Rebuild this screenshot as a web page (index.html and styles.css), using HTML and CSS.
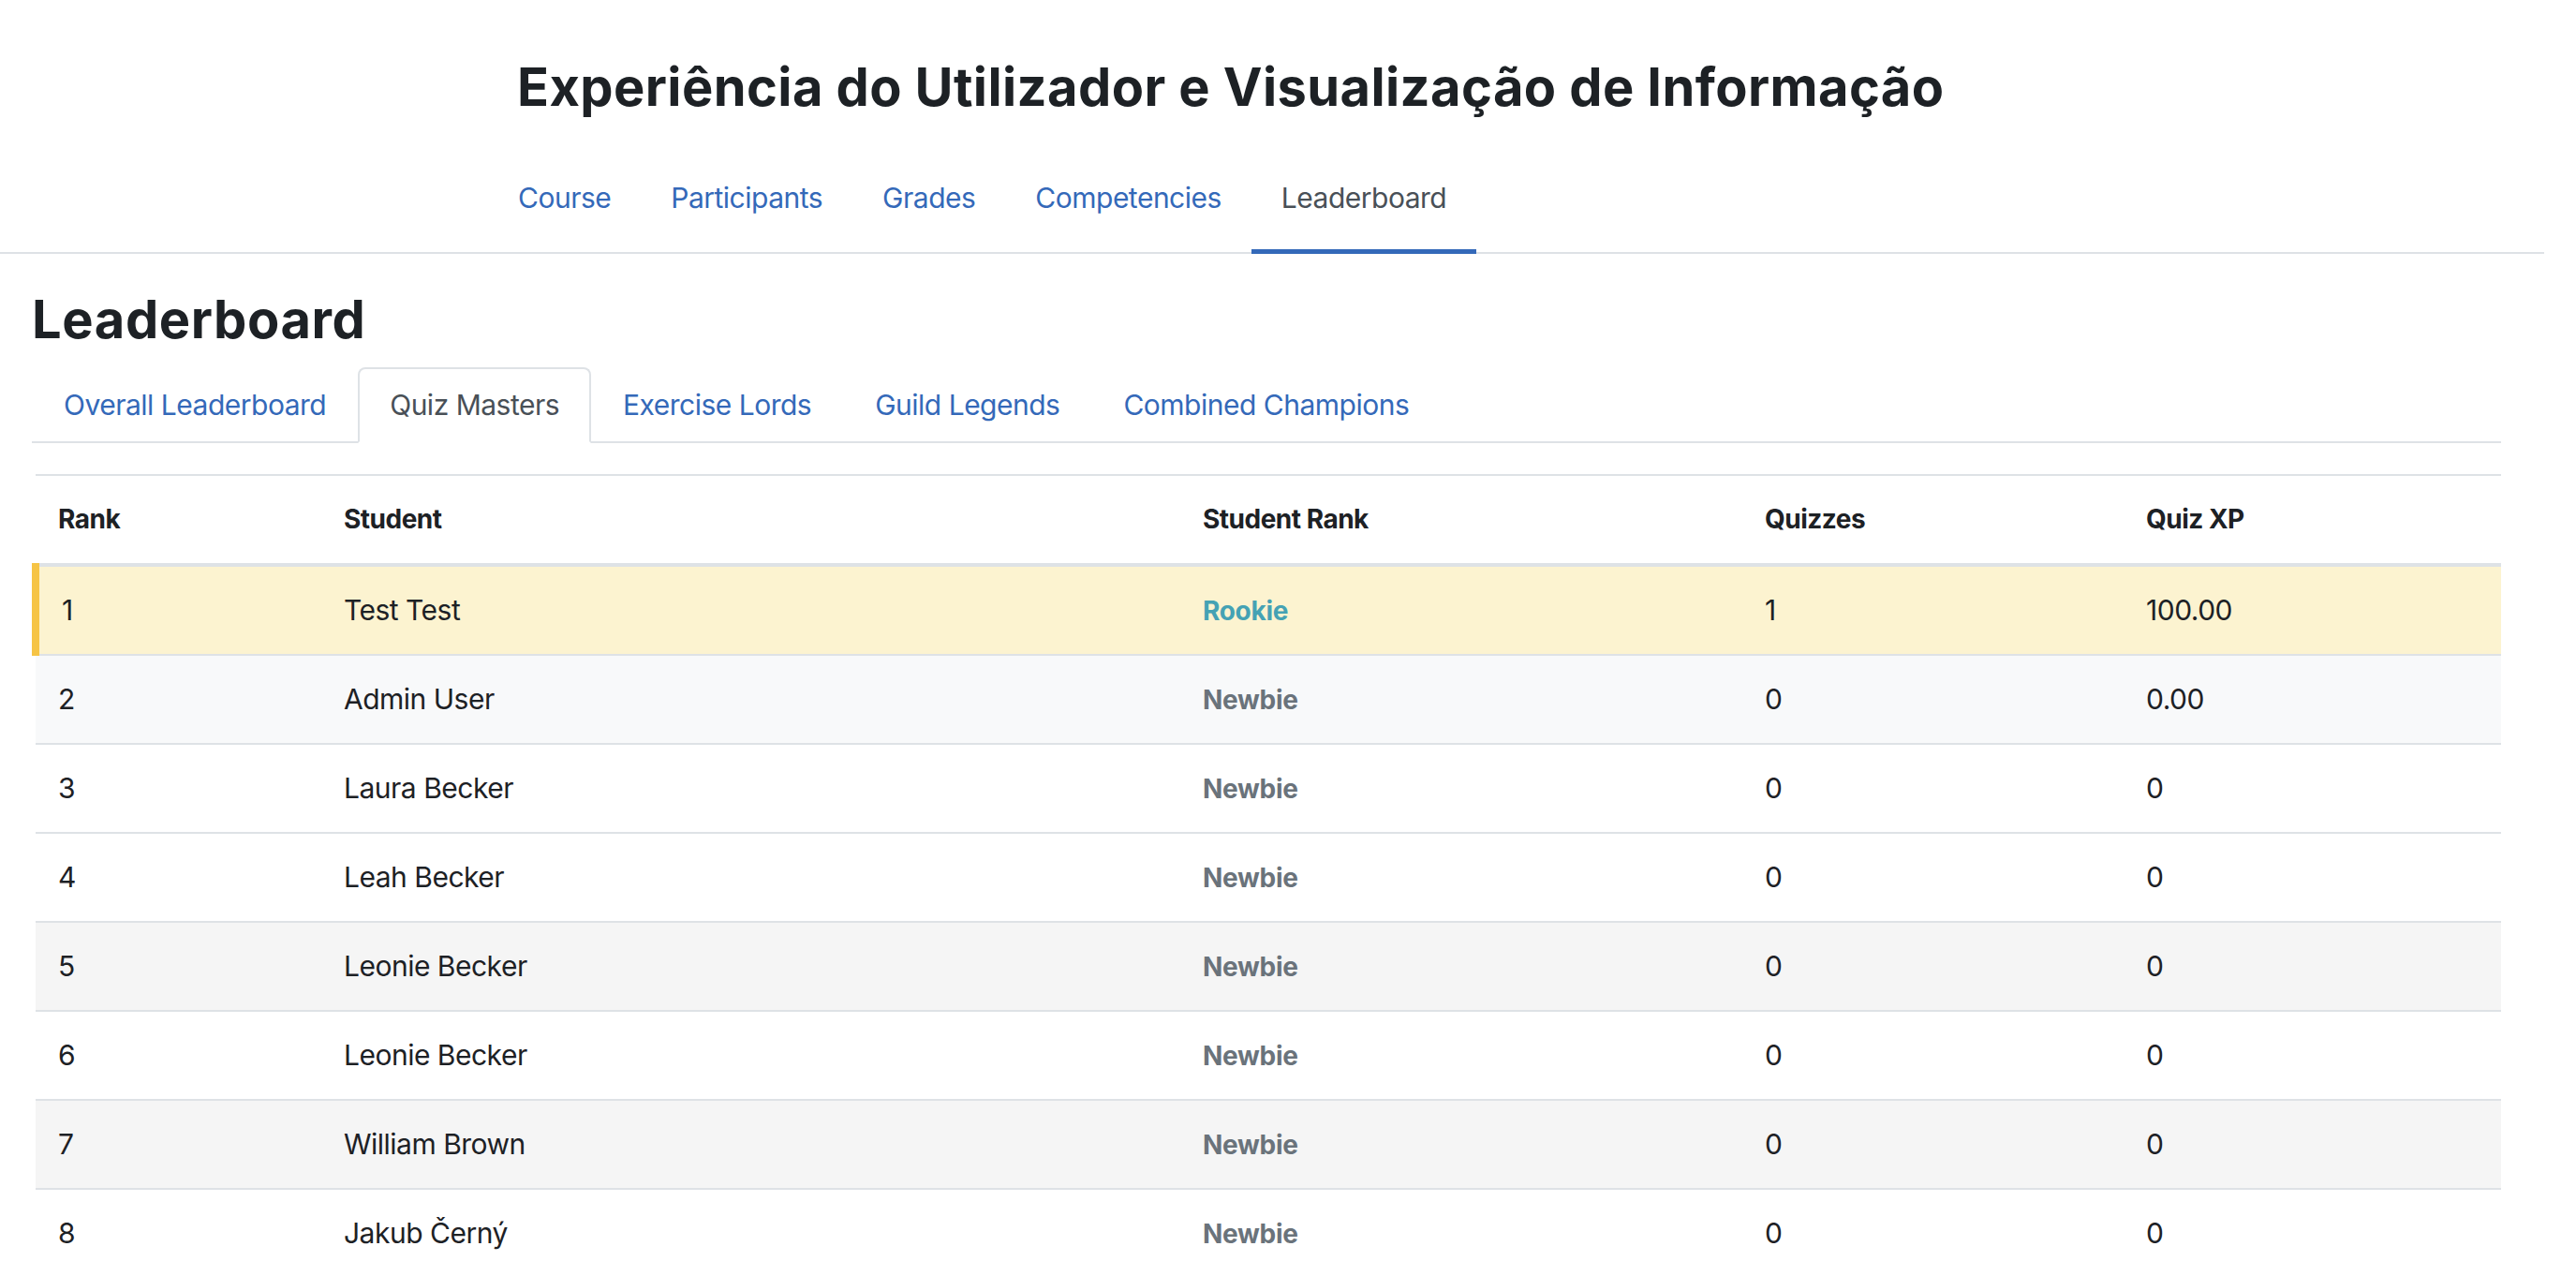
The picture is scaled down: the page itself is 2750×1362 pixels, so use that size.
FILE: index.html
```html
<!DOCTYPE html>
<html lang="pt">
<head>
<meta charset="utf-8">
<title>Leaderboard</title>
<link rel="stylesheet" href="styles.css">
</head>
<body>
<header class="page-header">
  <div class="header-inner">
    <h1 class="course-title">Experiência do Utilizador e Visualização de Informação</h1>
    <nav class="secondary-nav">
      <a class="nav-item" href="#">Course</a>
      <a class="nav-item" href="#">Participants</a>
      <a class="nav-item" href="#">Grades</a>
      <a class="nav-item" href="#">Competencies</a>
      <a class="nav-item active" href="#">Leaderboard</a>
    </nav>
  </div>
</header>
<main class="main">
  <h2 class="page-title">Leaderboard</h2>
  <ul class="tabs">
    <li class="tab">Overall Leaderboard</li>
    <li class="tab active">Quiz Masters</li>
    <li class="tab">Exercise Lords</li>
    <li class="tab">Guild Legends</li>
    <li class="tab">Combined Champions</li>
  </ul>
  <table class="board">
    <colgroup>
      <col class="c-rank">
      <col class="c-student">
      <col class="c-srank">
      <col class="c-quizzes">
      <col class="c-xp">
    </colgroup>
    <thead>
      <tr><th>Rank</th><th>Student</th><th>Student Rank</th><th>Quizzes</th><th>Quiz XP</th></tr>
    </thead>
    <tbody>
      <tr class="row-gold"><td>1</td><td>Test Test</td><td><span class="lvl rookie">Rookie</span></td><td>1</td><td>100.00</td></tr>
      <tr class="row-silver"><td>2</td><td>Admin User</td><td><span class="lvl newbie">Newbie</span></td><td>0</td><td>0.00</td></tr>
      <tr class="row-bronze"><td>3</td><td>Laura Becker</td><td><span class="lvl newbie">Newbie</span></td><td>0</td><td>0</td></tr>
      <tr><td>4</td><td>Leah Becker</td><td><span class="lvl newbie">Newbie</span></td><td>0</td><td>0</td></tr>
      <tr class="row-striped"><td>5</td><td>Leonie Becker</td><td><span class="lvl newbie">Newbie</span></td><td>0</td><td>0</td></tr>
      <tr><td>6</td><td>Leonie Becker</td><td><span class="lvl newbie">Newbie</span></td><td>0</td><td>0</td></tr>
      <tr class="row-striped"><td>7</td><td>William Brown</td><td><span class="lvl newbie">Newbie</span></td><td>0</td><td>0</td></tr>
      <tr><td>8</td><td>Jakub Černý</td><td><span class="lvl newbie">Newbie</span></td><td>0</td><td>0</td></tr>
    </tbody>
  </table>
</main>
</body>
</html>
```
FILE: styles.css
```css
html {
  overflow: hidden;
}

body {
  margin: 0;
  background: #ffffff;
  color: #1d2125;
  font-family: Inter, "Noto Sans", "Liberation Sans", sans-serif;
  font-size: 30px;
  line-height: 45px;
  letter-spacing: -0.5px;
}

.page-header {
  width: 2716px;
  border-bottom: 2px solid #dee2e6;
}

.header-inner {
  padding: 60px 0 0 552px;
}

.course-title {
  margin: 0;
  font-size: 56px;
  line-height: 67px;
  font-weight: 700;
  letter-spacing: 0.4px;
  color: #1d2125;
}

.secondary-nav {
  display: flex;
  margin: 46px 0 0 -31px;
}

.nav-item {
  position: relative;
  padding: 16px 32px 35px;
  color: #3469b9;
  text-decoration: none;
}

.nav-item.active {
  color: #495057;
}

.nav-item.active::after {
  content: "";
  position: absolute;
  left: 0;
  right: 0;
  bottom: -2px;
  height: 5px;
  background: #3469b9;
}

.main {
  width: 2636px;
  padding-left: 34px;
}

.page-title {
  margin: 37px 0 0;
  font-size: 56px;
  line-height: 67px;
  font-weight: 700;
  letter-spacing: 0.6px;
}

.tabs {
  display: flex;
  list-style: none;
  margin: 17px 0 0;
  padding: 0;
  border-bottom: 2px solid #dee2e6;
}

.tab {
  margin-bottom: -2px;
  padding: 16px 32px;
  border: 2px solid transparent;
  border-radius: 8px 8px 0 0;
  color: #3469b9;
}

.tab.active {
  color: #495057;
  background: #ffffff;
  border-color: #dee2e6 #dee2e6 #ffffff;
}

.board {
  margin: 33px 0 0;
  width: 2636px;
  border-collapse: collapse;
  table-layout: fixed;
}

.c-rank { width: 305px; }
.c-student { width: 917px; }
.c-srank { width: 600px; }
.c-quizzes { width: 407px; }
.c-xp { width: 403px; }

.board th {
  height: 45px;
  padding: 24px;
  text-align: left;
  font-size: 28px;
  line-height: 45px;
  font-weight: 700;
  letter-spacing: -0.5px;
  border-top: 2px solid #dee2e6;
  border-bottom: 4px solid #dee2e6;
}

.board td {
  height: 45px;
  padding: 24px;
  text-align: left;
  border-top: 2px solid #dee2e6;
}

.row-gold td {
  background: #fcf3d0;
}

.row-gold td:first-child {
  border-left: 8px solid #f6c445;
}

.row-silver td {
  background: #f8f9fa;
}

.row-striped td {
  background: #f5f5f5;
}

.lvl {
  font-size: 28px;
  line-height: 1;
  font-weight: 700;
  letter-spacing: -0.3px;
}

.rookie {
  color: #45a2b4;
}

.newbie {
  color: #6a737b;
}
```
